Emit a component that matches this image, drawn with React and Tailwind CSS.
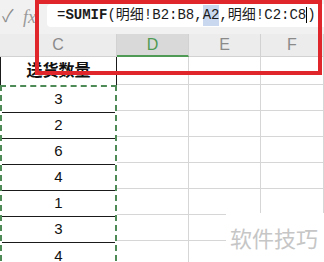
import React from 'react';

const values = [3, 2, 6, 4, 1, 3, 4];

const SideColumn = ({ letter, width, active }) => (
  <div className="flex flex-col shrink-0" style={{ width }}>
    <div
      className={`h-[23px] flex items-center justify-center border-r border-[#d2d2d2] text-[16px] ${
        active ? 'bg-[#d9d9d9] text-[#4f9a54] border-b-2 border-b-[#4f9a54]' : 'bg-[#ececec] text-[#8a8a8a] border-b border-b-[#d2d2d2]'
      }`}
    >
      {letter}
    </div>
    <div className="h-[28px] border-r border-b border-[#d6d6d6] bg-white" />
    {values.map((_, i) => (
      <div key={i} className="h-[26px] border-r border-b border-[#d6d6d6] bg-white" />
    ))}
  </div>
);

const App = () => {
  return (
    <div className="relative w-[324px] h-[262px] overflow-hidden bg-white font-['Liberation_Sans','Noto_Sans_CJK_SC',sans-serif]">
      {/* formula bar */}
      <div className="h-[34px] bg-[#f1f1f1] flex items-center">
        <span className="w-[22px] pl-[2px] text-[17px] text-[#8c8c8c]">✓</span>
        <span className="w-[25px] pl-[1px] font-['Liberation_Serif',serif] italic text-[18px] text-[#9a9a9a]">fx</span>
        <div className="flex-1 h-[23px] mb-[4px] bg-white rounded-l-[4px] flex items-center pl-[10px] font-['Liberation_Mono','Noto_Sans_CJK_SC',monospace] text-[14px] text-[#1a1a1a] whitespace-nowrap">
          <span>=</span>
          <span className="font-bold">SUMIF</span>
          <span>(明细!B2:B8,</span>
          <span className="bg-[#c9d8ee]">A2</span>
          <span>,明细!C2:C8</span>
          <span className="w-[1px] h-[16px] bg-black" />
          <span>)</span>
        </div>
      </div>

      {/* sheet */}
      <div className="flex">
        <div className="flex flex-col w-[117px] shrink-0">
          <div className="h-[23px] bg-[#ececec] border-r border-b border-[#d2d2d2] flex items-center justify-center text-[16px] text-[#8a8a8a]">
            C
          </div>
          <div className="h-[28px] border-l border-r border-[#1a1a1a] flex items-center justify-center font-bold text-[16px] text-[#111]">
            送货数量
          </div>
          <div className="border-2 border-dashed border-[#4e8a55]">
            {values.map((v, i) => (
              <div
                key={i}
                className={`h-[26px] flex items-center justify-center text-[15px] text-[#111] ${
                  i < values.length - 1 ? 'border-b border-[#1a1a1a]' : ''
                }`}
              >
                {v}
              </div>
            ))}
          </div>
        </div>
        <SideColumn letter="D" width={72} active />
        <SideColumn letter="E" width={72} />
        <SideColumn letter="F" width={63} />
      </div>

      {/* red annotation box */}
      <div className="absolute left-[35px] top-0 w-[287px] h-[75px] border-[4px] border-[#e0262b]" />

      {/* watermark */}
      <div className="absolute left-[226px] top-[213px] w-[98px] h-[49px] bg-white flex items-center pl-[4px] text-[22px] text-[#c6c6c6] font-['Noto_Sans_CJK_SC',sans-serif]">
        软件技巧
      </div>
    </div>
  );
};

export default App;
